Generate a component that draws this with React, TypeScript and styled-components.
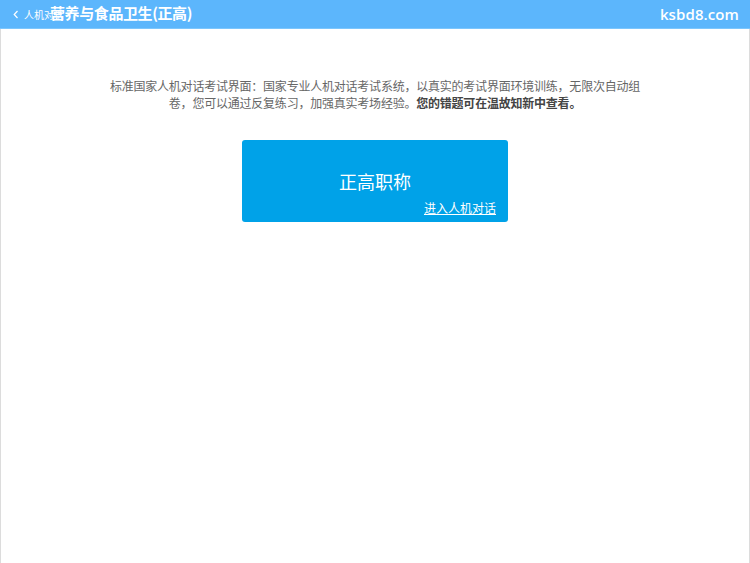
import React from 'react';
import styled, { createGlobalStyle } from 'styled-components';

const GlobalStyle = createGlobalStyle`
  html, body {
    margin: 0;
    padding: 0;
    height: 100%;
    background: #ffffff;
  }
  body {
    font-family: "Liberation Sans", Arial, "Noto Sans CJK SC", sans-serif;
  }
  #root {
    height: 100%;
  }
`;

const Page = styled.div`
  display: flex;
  flex-direction: column;
  height: 100%;
`;

const Header = styled.header`
  position: relative;
  height: 28px;
  flex-shrink: 0;
  display: flex;
  align-items: center;
  background: #5cb6fc;
  border-bottom: 1px solid #7cc6fd;
  color: #fff;
`;

const BackLink = styled.a`
  display: flex;
  align-items: center;
  gap: 5px;
  margin-left: 13px;
  font-size: 10px;
  color: #fff;
  text-decoration: none;
  font-family: "Noto Sans CJK SC", sans-serif;
`;

const Title = styled.h1`
  position: absolute;
  left: 50px;
  top: 0;
  margin: 0;
  height: 28px;
  line-height: 26px;
  font-size: 15px;
  font-weight: bold;
  font-family: "Noto Sans CJK SC", sans-serif;
  letter-spacing: -0.4px;
`;

const Brand = styled.div`
  margin-left: auto;
  margin-right: 11px;
  font-size: 15px;
  font-family: "Open Sans", "Liberation Sans", sans-serif;
  font-weight: 600;
  letter-spacing: 0.1px;
`;

const Body = styled.main`
  flex: 1;
  border-left: 1px solid #dcdcdc;
  border-right: 1px solid #dcdcdc;
  display: flex;
  flex-direction: column;
  align-items: center;
  padding-top: 48px;
`;

const Intro = styled.p`
  width: 534px;
  margin: 0;
  text-align: center;
  font-size: 12px;
  line-height: 17px;
  letter-spacing: -0.22px;
  color: #666;
  font-family: "Noto Sans CJK SC", sans-serif;

  strong {
    color: #444;
    font-weight: bold;
  }
`;

const ExamCard = styled.a`
  margin-top: 29px;
  width: 266px;
  height: 82px;
  box-sizing: border-box;
  border-radius: 3px;
  background: #00a2e8;
  color: #fff;
  text-decoration: none;
  display: flex;
  flex-direction: column;
  align-items: center;
  padding: 28px 12px 6px;
  font-family: "Noto Sans CJK SC", sans-serif;
`;

const CardTitle = styled.div`
  font-size: 18px;
  line-height: 26px;
`;

const CardLink = styled.span`
  align-self: flex-end;
  margin-top: 6px;
  font-size: 12px;
  line-height: 16px;
  text-decoration: underline;
`;

const ChevronLeft = () => (
  <svg width="6" height="9" viewBox="0 0 6 9" fill="none" stroke="#fff" strokeWidth="1.2">
    <polyline points="4.5,1 1.2,4.5 4.5,8" />
  </svg>
);

export default function App() {
  return (
    <>
      <GlobalStyle />
      <Page>
        <Header>
          <BackLink href="#">
            <ChevronLeft />
            人机对话
          </BackLink>
          <Title>营养与食品卫生(正高)</Title>
          <Brand>ksbd8.com</Brand>
        </Header>
        <Body>
          <Intro>
            标准国家人机对话考试界面：国家专业人机对话考试系统，以真实的考试界面环境训练，无限次自动组卷，您可以通过反复练习，加强真实考场经验。
            <strong>您的错题可在温故知新中查看。</strong>
          </Intro>
          <ExamCard href="#">
            <CardTitle>正高职称</CardTitle>
            <CardLink>进入人机对话</CardLink>
          </ExamCard>
        </Body>
      </Page>
    </>
  );
}
